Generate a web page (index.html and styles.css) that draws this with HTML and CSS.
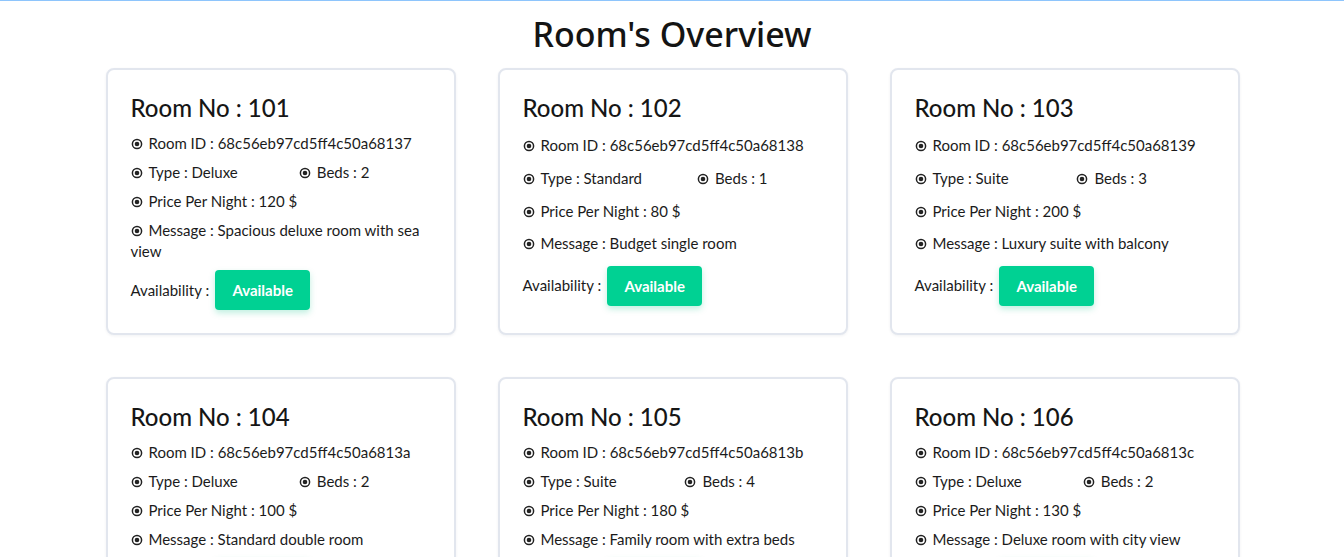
FILE: index.html
```html
<!DOCTYPE html>
<html lang="en">
<head>
<meta charset="utf-8">
<title>Room's Overview</title>
<link rel="stylesheet" href="styles.css">
</head>
<body>
<div class="page">
  <h1 class="page-title">Room's Overview</h1>
  <div class="room-grid">

    <div class="room-card">
      <h2 class="room-title">Room No : 101</h2>
      <div class="room-body">
        <div class="row"><span class="item"><svg class="dot" viewBox="0 0 12 12"><circle cx="6" cy="6" r="4.6" fill="none" stroke="currentColor" stroke-width="1.5"/><circle cx="6" cy="6" r="2.3" fill="currentColor"/></svg>Room ID : 68c56eb97cd5ff4c50a68137</span></div>
        <div class="row split"><span class="item"><svg class="dot" viewBox="0 0 12 12"><circle cx="6" cy="6" r="4.6" fill="none" stroke="currentColor" stroke-width="1.5"/><circle cx="6" cy="6" r="2.3" fill="currentColor"/></svg>Type : Deluxe</span><span class="item"><svg class="dot" viewBox="0 0 12 12"><circle cx="6" cy="6" r="4.6" fill="none" stroke="currentColor" stroke-width="1.5"/><circle cx="6" cy="6" r="2.3" fill="currentColor"/></svg>Beds : 2</span></div>
        <div class="row"><span class="item"><svg class="dot" viewBox="0 0 12 12"><circle cx="6" cy="6" r="4.6" fill="none" stroke="currentColor" stroke-width="1.5"/><circle cx="6" cy="6" r="2.3" fill="currentColor"/></svg>Price Per Night : 120 $</span></div>
        <div class="row msg"><svg class="dot" viewBox="0 0 12 12"><circle cx="6" cy="6" r="4.6" fill="none" stroke="currentColor" stroke-width="1.5"/><circle cx="6" cy="6" r="2.3" fill="currentColor"/></svg>Message : Spacious deluxe room with sea view</div>
        <div class="row avail"><span>Availability :</span><button class="badge">Available</button></div>
      </div>
    </div>

    <div class="room-card">
      <h2 class="room-title">Room No : 102</h2>
      <div class="room-body">
        <div class="row"><span class="item"><svg class="dot" viewBox="0 0 12 12"><circle cx="6" cy="6" r="4.6" fill="none" stroke="currentColor" stroke-width="1.5"/><circle cx="6" cy="6" r="2.3" fill="currentColor"/></svg>Room ID : 68c56eb97cd5ff4c50a68138</span></div>
        <div class="row split"><span class="item"><svg class="dot" viewBox="0 0 12 12"><circle cx="6" cy="6" r="4.6" fill="none" stroke="currentColor" stroke-width="1.5"/><circle cx="6" cy="6" r="2.3" fill="currentColor"/></svg>Type : Standard</span><span class="item"><svg class="dot" viewBox="0 0 12 12"><circle cx="6" cy="6" r="4.6" fill="none" stroke="currentColor" stroke-width="1.5"/><circle cx="6" cy="6" r="2.3" fill="currentColor"/></svg>Beds : 1</span></div>
        <div class="row"><span class="item"><svg class="dot" viewBox="0 0 12 12"><circle cx="6" cy="6" r="4.6" fill="none" stroke="currentColor" stroke-width="1.5"/><circle cx="6" cy="6" r="2.3" fill="currentColor"/></svg>Price Per Night : 80 $</span></div>
        <div class="row msg"><svg class="dot" viewBox="0 0 12 12"><circle cx="6" cy="6" r="4.6" fill="none" stroke="currentColor" stroke-width="1.5"/><circle cx="6" cy="6" r="2.3" fill="currentColor"/></svg>Message : Budget single room</div>
        <div class="row avail"><span>Availability :</span><button class="badge">Available</button></div>
      </div>
    </div>

    <div class="room-card">
      <h2 class="room-title">Room No : 103</h2>
      <div class="room-body">
        <div class="row"><span class="item"><svg class="dot" viewBox="0 0 12 12"><circle cx="6" cy="6" r="4.6" fill="none" stroke="currentColor" stroke-width="1.5"/><circle cx="6" cy="6" r="2.3" fill="currentColor"/></svg>Room ID : 68c56eb97cd5ff4c50a68139</span></div>
        <div class="row split"><span class="item"><svg class="dot" viewBox="0 0 12 12"><circle cx="6" cy="6" r="4.6" fill="none" stroke="currentColor" stroke-width="1.5"/><circle cx="6" cy="6" r="2.3" fill="currentColor"/></svg>Type : Suite</span><span class="item"><svg class="dot" viewBox="0 0 12 12"><circle cx="6" cy="6" r="4.6" fill="none" stroke="currentColor" stroke-width="1.5"/><circle cx="6" cy="6" r="2.3" fill="currentColor"/></svg>Beds : 3</span></div>
        <div class="row"><span class="item"><svg class="dot" viewBox="0 0 12 12"><circle cx="6" cy="6" r="4.6" fill="none" stroke="currentColor" stroke-width="1.5"/><circle cx="6" cy="6" r="2.3" fill="currentColor"/></svg>Price Per Night : 200 $</span></div>
        <div class="row msg"><svg class="dot" viewBox="0 0 12 12"><circle cx="6" cy="6" r="4.6" fill="none" stroke="currentColor" stroke-width="1.5"/><circle cx="6" cy="6" r="2.3" fill="currentColor"/></svg>Message : Luxury suite with balcony</div>
        <div class="row avail"><span>Availability :</span><button class="badge">Available</button></div>
      </div>
    </div>

    <div class="room-card">
      <h2 class="room-title">Room No : 104</h2>
      <div class="room-body">
        <div class="row"><span class="item"><svg class="dot" viewBox="0 0 12 12"><circle cx="6" cy="6" r="4.6" fill="none" stroke="currentColor" stroke-width="1.5"/><circle cx="6" cy="6" r="2.3" fill="currentColor"/></svg>Room ID : 68c56eb97cd5ff4c50a6813a</span></div>
        <div class="row split"><span class="item"><svg class="dot" viewBox="0 0 12 12"><circle cx="6" cy="6" r="4.6" fill="none" stroke="currentColor" stroke-width="1.5"/><circle cx="6" cy="6" r="2.3" fill="currentColor"/></svg>Type : Deluxe</span><span class="item"><svg class="dot" viewBox="0 0 12 12"><circle cx="6" cy="6" r="4.6" fill="none" stroke="currentColor" stroke-width="1.5"/><circle cx="6" cy="6" r="2.3" fill="currentColor"/></svg>Beds : 2</span></div>
        <div class="row"><span class="item"><svg class="dot" viewBox="0 0 12 12"><circle cx="6" cy="6" r="4.6" fill="none" stroke="currentColor" stroke-width="1.5"/><circle cx="6" cy="6" r="2.3" fill="currentColor"/></svg>Price Per Night : 100 $</span></div>
        <div class="row msg"><svg class="dot" viewBox="0 0 12 12"><circle cx="6" cy="6" r="4.6" fill="none" stroke="currentColor" stroke-width="1.5"/><circle cx="6" cy="6" r="2.3" fill="currentColor"/></svg>Message : Standard double room</div>
        <div class="row avail"><span>Availability :</span><button class="badge">Available</button></div>
      </div>
    </div>

    <div class="room-card">
      <h2 class="room-title">Room No : 105</h2>
      <div class="room-body">
        <div class="row"><span class="item"><svg class="dot" viewBox="0 0 12 12"><circle cx="6" cy="6" r="4.6" fill="none" stroke="currentColor" stroke-width="1.5"/><circle cx="6" cy="6" r="2.3" fill="currentColor"/></svg>Room ID : 68c56eb97cd5ff4c50a6813b</span></div>
        <div class="row split"><span class="item"><svg class="dot" viewBox="0 0 12 12"><circle cx="6" cy="6" r="4.6" fill="none" stroke="currentColor" stroke-width="1.5"/><circle cx="6" cy="6" r="2.3" fill="currentColor"/></svg>Type : Suite</span><span class="item"><svg class="dot" viewBox="0 0 12 12"><circle cx="6" cy="6" r="4.6" fill="none" stroke="currentColor" stroke-width="1.5"/><circle cx="6" cy="6" r="2.3" fill="currentColor"/></svg>Beds : 4</span></div>
        <div class="row"><span class="item"><svg class="dot" viewBox="0 0 12 12"><circle cx="6" cy="6" r="4.6" fill="none" stroke="currentColor" stroke-width="1.5"/><circle cx="6" cy="6" r="2.3" fill="currentColor"/></svg>Price Per Night : 180 $</span></div>
        <div class="row msg"><svg class="dot" viewBox="0 0 12 12"><circle cx="6" cy="6" r="4.6" fill="none" stroke="currentColor" stroke-width="1.5"/><circle cx="6" cy="6" r="2.3" fill="currentColor"/></svg>Message : Family room with extra beds</div>
        <div class="row avail"><span>Availability :</span><button class="badge">Available</button></div>
      </div>
    </div>

    <div class="room-card">
      <h2 class="room-title">Room No : 106</h2>
      <div class="room-body">
        <div class="row"><span class="item"><svg class="dot" viewBox="0 0 12 12"><circle cx="6" cy="6" r="4.6" fill="none" stroke="currentColor" stroke-width="1.5"/><circle cx="6" cy="6" r="2.3" fill="currentColor"/></svg>Room ID : 68c56eb97cd5ff4c50a6813c</span></div>
        <div class="row split"><span class="item"><svg class="dot" viewBox="0 0 12 12"><circle cx="6" cy="6" r="4.6" fill="none" stroke="currentColor" stroke-width="1.5"/><circle cx="6" cy="6" r="2.3" fill="currentColor"/></svg>Type : Deluxe</span><span class="item"><svg class="dot" viewBox="0 0 12 12"><circle cx="6" cy="6" r="4.6" fill="none" stroke="currentColor" stroke-width="1.5"/><circle cx="6" cy="6" r="2.3" fill="currentColor"/></svg>Beds : 2</span></div>
        <div class="row"><span class="item"><svg class="dot" viewBox="0 0 12 12"><circle cx="6" cy="6" r="4.6" fill="none" stroke="currentColor" stroke-width="1.5"/><circle cx="6" cy="6" r="2.3" fill="currentColor"/></svg>Price Per Night : 130 $</span></div>
        <div class="row msg"><svg class="dot" viewBox="0 0 12 12"><circle cx="6" cy="6" r="4.6" fill="none" stroke="currentColor" stroke-width="1.5"/><circle cx="6" cy="6" r="2.3" fill="currentColor"/></svg>Message : Deluxe room with city view</div>
        <div class="row avail"><span>Availability :</span><button class="badge">Available</button></div>
      </div>
    </div>

  </div>
</div>
</body>
</html>
```

FILE: styles.css
```css
html, body {
  margin: 0;
  padding: 0;
  background: #ffffff;
}

body {
  border-top: 1px solid #8ec5fc;
  font-family: "Lato", "Noto Sans", sans-serif;
  color: #1b1b1b;
}

.page {
  display: flex;
  flex-direction: column;
  align-items: center;
}

.page-title {
  margin: 10px 0 11px;
  font-family: "Noto Sans", "Open Sans", sans-serif;
  font-weight: 500;
  font-size: 34px;
  line-height: 46px;
  color: #141414;
}

.room-grid {
  display: grid;
  grid-template-columns: repeat(3, 350px);
  column-gap: 42px;
  row-gap: 42px;
  margin-left: 1px;
}

.room-card {
  box-sizing: border-box;
  display: flex;
  flex-direction: column;
  border: 2px solid #e2e6ee;
  border-radius: 8px;
  box-shadow: 0 1px 3px rgba(20, 30, 60, 0.06);
  padding: 23px 23px 23px;
  background: #fff;
}

.room-title {
  margin: 0 0 11px;
  font-size: 24px;
  line-height: 29px;
  font-weight: 500;
  color: #161616;
}

.room-body {
  flex: 1;
  display: grid;
  grid-template-columns: 1fr;
  row-gap: 8px;
  font-size: 15px;
  line-height: 21px;
}

.row {
  display: flex;
  align-items: center;
}

.row.split .item {
  flex: 1 1 auto;
}

.row.msg {
  display: block;
}

.item {
  display: inline-flex;
  align-items: center;
  white-space: nowrap;
}

.dot {
  width: 12px;
  height: 12px;
  margin-right: 6px;
  color: #222;
  flex: none;
  vertical-align: -1px;
}

.avail {
  align-self: start;
  gap: 6px;
}

.badge {
  width: 95px;
  height: 40px;
  border: none;
  border-radius: 4px;
  background: #00d193;
  color: #fff;
  font-family: inherit;
  font-size: 15px;
  font-weight: 700;
  box-shadow: 0 3px 6px rgba(0, 190, 130, 0.25);
  padding: 0;
}
```
